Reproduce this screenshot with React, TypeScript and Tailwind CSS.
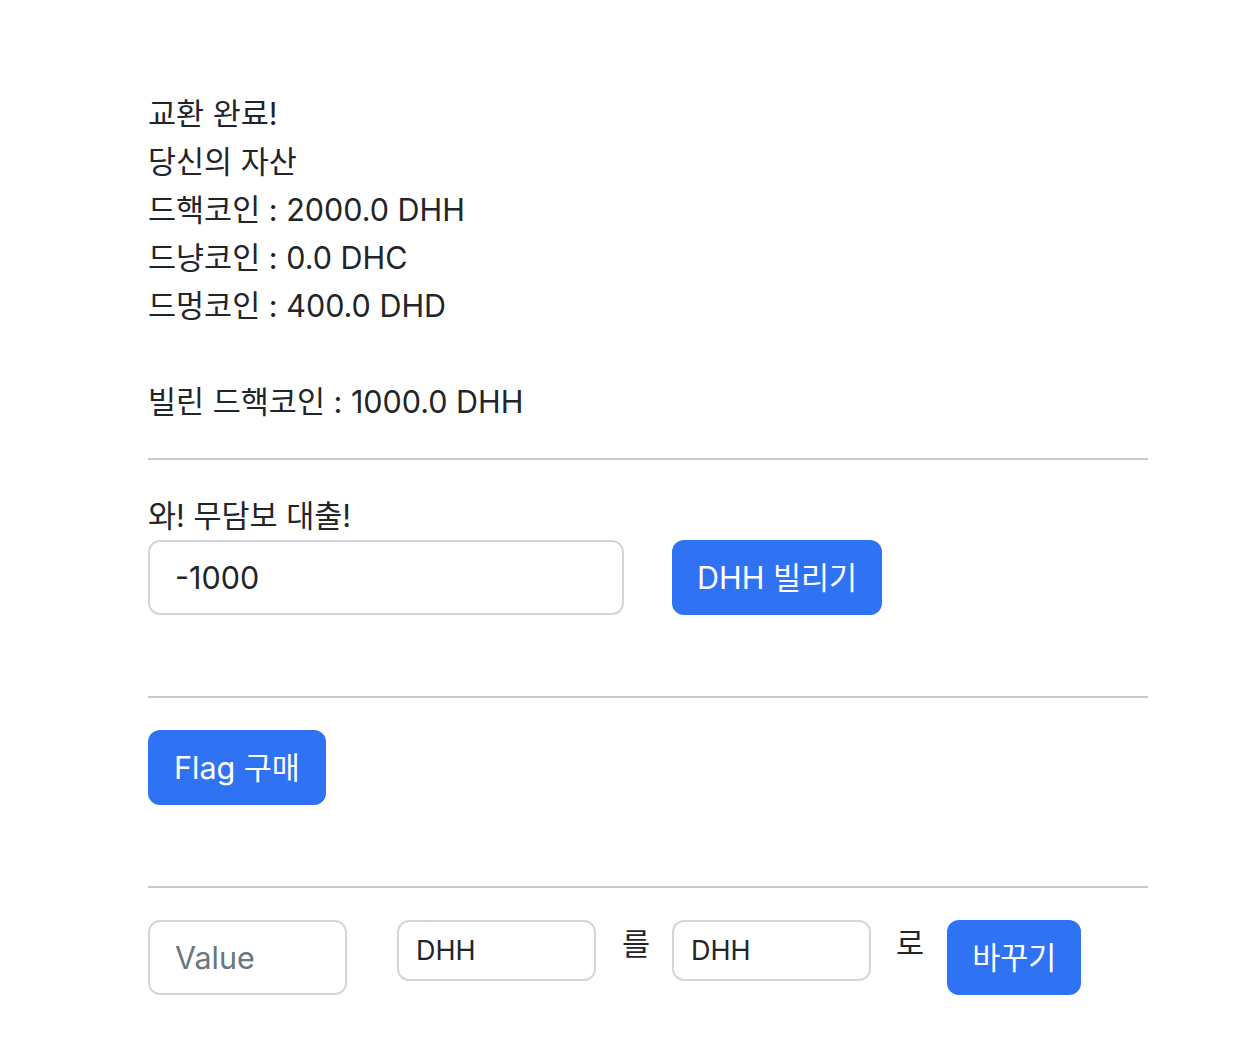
import React from "react";

const font = { fontFamily: 'Inter, "Noto Sans CJK KR", sans-serif' };

export default function App() {
  return (
    <div className="min-h-[1048px] bg-white text-[#212529]" style={font}>
      <div className="w-[1000px] ml-[148px] pt-[90px] text-[30.5px] leading-[48px]">
        <div>교환 완료!</div>
        <div>당신의 자산</div>
        <div>드핵코인 : 2000.0 DHH</div>
        <div>드냥코인 : 0.0 DHC</div>
        <div>드멍코인 : 400.0 DHD</div>
        <div className="h-[48px]" />
        <div>빌린 드핵코인 : 1000.0 DHH</div>

        <hr className="mt-[32px] mb-[32px] border-t-2 border-[#c8c9ca]" />

        {/* borrow */}
        <div>와! 무담보 대출!</div>
        <div className="flex gap-[48px]">
          <input
            defaultValue="-1000"
            className="w-[476px] h-[75px] px-[25px] border-2 border-[#d3d6da] rounded-[12px] text-[30.5px] outline-none"
            style={font}
          />
          <button className="h-[75px] px-[25px] rounded-[12px] bg-[#2f72f4] text-white text-[30.5px]">
            DHH 빌리기
          </button>
        </div>

        <hr className="mt-[81px] mb-[32px] border-t-2 border-[#c8c9ca]" />

        <button className="h-[75px] px-[26px] rounded-[12px] bg-[#2f72f4] text-white text-[30.5px]">
          Flag 구매
        </button>

        <hr className="mt-[81px] mb-[32px] border-t-2 border-[#c8c9ca]" />

        {/* exchange */}
        <div className="flex items-start">
          <input
            placeholder="Value"
            className="w-[199px] h-[75px] px-[25px] border-2 border-[#d3d6da] rounded-[12px] text-[30.5px] outline-none placeholder:text-[#6c757d]"
            style={font}
          />
          <div className="ml-[50px] w-[199px] h-[61px] px-[17px] flex items-center border-2 border-[#d3d6da] rounded-[12px] text-[27px]">
            DHH
          </div>
          <span className="ml-[26px] mr-[22px]">를</span>
          <div className="w-[199px] h-[61px] px-[17px] flex items-center border-2 border-[#d3d6da] rounded-[12px] text-[27px]">
            DHH
          </div>
          <span className="ml-[25px] mr-[23px]">로</span>
          <button className="h-[75px] px-[25px] rounded-[12px] bg-[#2f72f4] text-white text-[30.5px]">
            바꾸기
          </button>
        </div>
      </div>
    </div>
  );
}
